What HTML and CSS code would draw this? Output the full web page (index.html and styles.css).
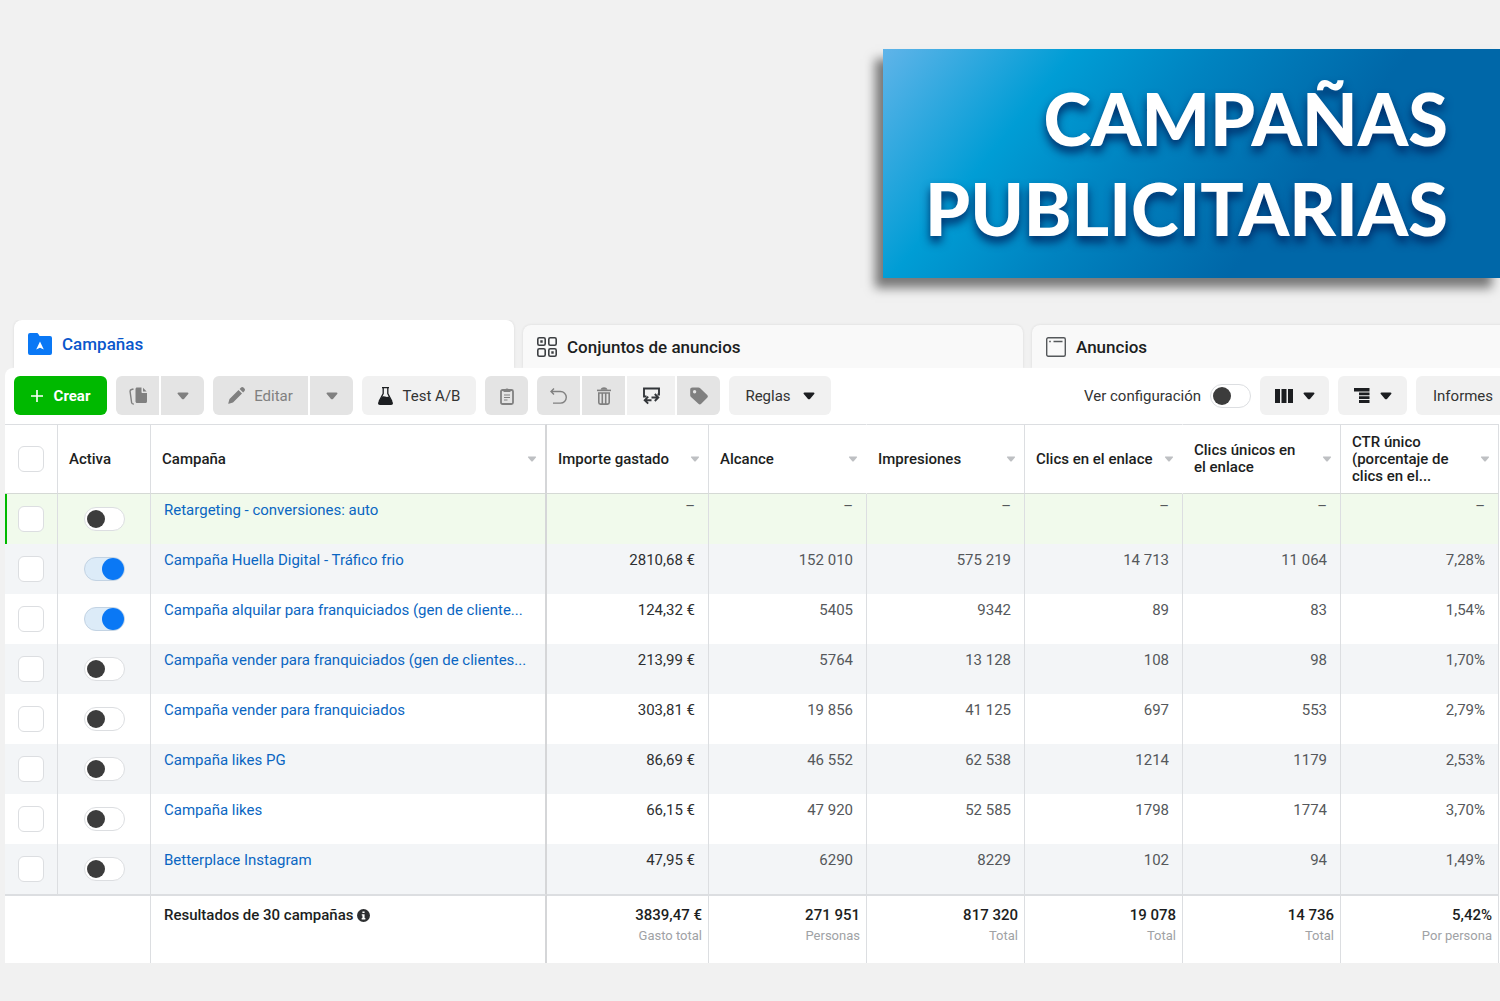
FILE: index.html
```html
<!DOCTYPE html>
<html lang="es">
<head>
    <meta charset="UTF-8">
    <meta name="viewport" content="width=device-width, initial-scale=1.0">
    <title>Campañas publicitarias</title>
    <link rel="stylesheet" href="styles.css">
</head>
<body>

    <svg class="sprite" aria-hidden="true">
        <symbol id="caret" viewBox="0 0 12 8"><path d="M1.5 .5h9c.9 0 1.3 1 .7 1.6L7 6.9c-.6.6-1.4.6-2 0L.8 2.100C.2 1.500.6.5 1.500.5z"/></symbol>
    </svg>

    <header class="banner">
        <h1>CAMPAÑAS<br>PUBLICITARIAS</h1>
    </header>

    <main class="manager">
        <nav class="tabs">
            <a class="tab active" href="#campanas">
                <svg width="24" height="22" viewBox="0 0 24 22"><path fill="#0a78f5" d="M2 0h6.500c1 0 1.500.4 2 1.200L11.600 3H22a2 2 0 0 1 2 2v15a2 2 0 0 1-2 2H2a2 2 0 0 1-2-2V2a2 2 0 0 1 2-2z"/><path fill="#fff" d="M12 8.500 15.800 16.500 12 14.800 8.200 16.500z"/></svg>
                Campañas
            </a>
            <a class="tab" href="#conjuntos">
                <svg width="20" height="20" viewBox="0 0 20 20" fill="none" stroke="#3c3f42" stroke-width="1.600"><rect x=".8" y=".8" width="7.400" height="7.400" rx="1.500"/><rect x="11.800" y=".8" width="7.400" height="7.400" rx="1.500"/><rect x=".8" y="11.800" width="7.400" height="7.400" rx="1.500"/><rect x="11.800" y="11.800" width="7.400" height="7.400" rx="1.500"/><path stroke-width="2.400" d="M3.300 4.500h2.400M14.300 15.500h2.400"/></svg>
                Conjuntos de anuncios
            </a>
            <a class="tab" href="#anuncios">
                <svg width="20" height="20" viewBox="0 0 20 20" fill="none" stroke="#55585b"><rect x=".7" y=".7" width="18.600" height="18.600" rx="1.500" stroke-width="1.400"/><path stroke-width="1.500" d="M3.200 4.500h1.600M7.500 4.500h9"/></svg>
                Anuncios
            </a>
        </nav>

        <section class="panel">
            <div class="toolbar">
                <button class="btn create">
                    <svg width="12" height="12" viewBox="0 0 12 12"><path stroke="currentColor" stroke-width="1.600" d="M6 0v12M0 6h12"/></svg>
                    Crear
                </button>
                <div class="group">
                    <button class="btn off icon" aria-label="Duplicar">
                        <svg width="18" height="18" viewBox="0 0 18 18"><path fill="currentColor" d="M8 .5h4.500V5c0 .7.500 1 1 1H18v8.500c0 .8-.6 1.500-1.400 1.500H8c-.8 0-1.500-.7-1.500-1.500V2C6.500 1.100 7.200.5 8 .5zM14 .8 17.600 4.600H14z"/><path fill="none" stroke="currentColor" stroke-width="1.400" d="M4.500 2 2.600 2.500C1.500 2.800.9 3.600 1.100 4.700l1.500 10.800c.1 1 .9 1.600 2.200 1.500"/></svg>
                    </button>
                    <button class="btn off icon" aria-label="Opciones de duplicar"><svg class="caret"><use href="#caret"/></svg></button>
                </div>
                <div class="group">
                    <button class="btn off edit">
                        <svg width="17" height="17" viewBox="0 0 17 17" fill="currentColor"><path d="M10.500 3 14 6.500 5 15.500.8 16.700c-.4.100-.6-.1-.5-.5L1.500 12zM11.600 1.900l1.200-1.200c.9-.9 1.900-.9 2.700-.1l.9.900c.8.800.8 1.900-.1 2.700l-1.200 1.200z"/></svg>
                        Editar
                    </button>
                    <button class="btn off icon" aria-label="Opciones de edición"><svg class="caret"><use href="#caret"/></svg></button>
                </div>
                <button class="btn test">
                    <svg width="15" height="18" viewBox="0 0 15 18"><path fill="none" stroke="#1c1e21" stroke-width="1.300" d="M4 .7h7M5.200 1v5.500L1 14.500M9.800 1v5.500L14 14.500"/><path fill="#1c1e21" d="M4.200 9.500c2-.8 4 1.200 6.600 0l3.800 5.500c.8 1.500.2 3-1.500 3H1.900C.2 18-.4 16.500.4 15z"/></svg>
                    Test A/B
                </button>
                <button class="btn off icon" aria-label="Pegar">
                    <svg width="14" height="18" viewBox="0 0 14 18"><rect x="1" y="3" width="12" height="14" rx="1.500" fill="none" stroke="currentColor" stroke-width="1.800"/><path fill="currentColor" d="M3.500 5V3h1.600a2 2 0 0 1 3.800 0h1.600v2z"/><path stroke="currentColor" stroke-width="1.200" d="M4 8h6M4 10.500h6M4 13h3.500"/></svg>
                </button>
                <div class="group">
                    <button class="btn off icon" aria-label="Deshacer">
                        <svg width="17" height="16" viewBox="0 0 17 16" fill="none" stroke="currentColor" stroke-width="1.400"><path d="M1 3.500h9.500a5.800 5.800 0 0 1 0 11.600H3M4 .5 1 3.500l3 3"/></svg>
                    </button>
                    <button class="btn off icon" aria-label="Eliminar">
                        <svg width="14" height="18" viewBox="0 0 14 18" fill="none" stroke="currentColor"><path stroke-width="1.600" d="M0 3.400h14"/><path fill="currentColor" stroke="none" d="M3.500 2.800C4 1 5.500.3 7 .3s3 .7 3.500 2.500z"/><path stroke-width="1.600" d="M1.800 6v9.500c0 1 .6 1.600 1.600 1.600h7.200c1 0 1.600-.6 1.600-1.600V6zM5.300 6v10.500M8.700 6v10.500"/></svg>
                    </button>
                    <button class="btn swap" aria-label="Prueba A/B">
                        <svg width="17" height="18" viewBox="0 0 17 18" fill="none" stroke="#33363a" stroke-width="1.900"><path d="M3.500 9.500H1V1.500h15v6h-1.500"/><path d="M8.500 13.200H2M5.200 9.700 1.700 13.200l3.500 3.500M8.500 10.500H15M11.800 7l3.500 3.500-3.500 3.500"/></svg>
                    </button>
                    <button class="btn off icon" aria-label="Etiquetar">
                        <svg width="18" height="18" viewBox="0 0 18 18"><path fill="currentColor" fill-rule="evenodd" d="M2.500.5h6c.6 0 1.200.3 1.700.7l7 6.800c.9.900.9 1.800 0 2.700l-6 6c-.9.900-1.900.9-2.800 0L1 10c-.5-.5-.8-1-.8-1.700V2.800C.2 1.400 1 .5 2.500.5zM4.600 3a1.700 1.700 0 1 0 0 3.400 1.700 1.700 0 0 0 0-3.400z"/></svg>
                    </button>
                </div>
                <button class="btn rules">Reglas <svg class="caret"><use href="#caret"/></svg></button>

                <label class="config">
                    Ver configuración
                    <input class="switch" type="checkbox">
                </label>
                <button class="btn view" aria-label="Columnas">
                    <svg width="18" height="14" viewBox="0 0 18 14" fill="#1c1e21"><path d="M0 0h5v14H0zM6.500 0h5v14h-5zM13 0h5v14h-5z"/></svg>
                    <svg class="caret"><use href="#caret"/></svg>
                </button>
                <button class="btn view" aria-label="Desglose">
                    <svg width="16" height="15" viewBox="0 0 16 15" fill="#1c1e21"><path d="M0 0h15.500v3.500H0zM5 4.500h10.500v2.800H5zM5 8.300h10.500v2.700H5zM5 12h10.500v3H5z"/></svg>
                    <svg class="caret"><use href="#caret"/></svg>
                </button>
                <button class="btn reports">Informes</button>
            </div>

            <table class="campaigns">
                <colgroup>
                    <col class="col-check">
                    <col class="col-active">
                    <col>
                    <col class="col-spend">
                    <col class="col-metric" span="5">
                </colgroup>
                <thead>
                    <tr>
                        <th class="center"><input class="check" type="checkbox" aria-label="Seleccionar todas"></th>
                        <th>Activa</th>
                        <th class="frozen"><div class="head"><span>Campaña</span><svg class="sort"><use href="#caret"/></svg></div></th>
                        <th><div class="head"><span>Importe gastado</span><svg class="sort"><use href="#caret"/></svg></div></th>
                        <th class="open"><div class="head"><span>Alcance</span><svg class="sort"><use href="#caret"/></svg></div></th>
                        <th><div class="head"><span>Impresiones</span><svg class="sort"><use href="#caret"/></svg></div></th>
                        <th class="open"><div class="head"><span>Clics en el enlace</span><svg class="sort"><use href="#caret"/></svg></div></th>
                        <th><div class="head"><span>Clics únicos en<br>el enlace</span><svg class="sort"><use href="#caret"/></svg></div></th>
                        <th><div class="head"><span>CTR único<br>(porcentaje de<br>clics en el...</span><svg class="sort"><use href="#caret"/></svg></div></th>
                    </tr>
                </thead>
                <tbody>
                    <tr class="draft">
                        <td class="center"><input class="check" type="checkbox" aria-label="Seleccionar"></td>
                        <td class="center"><input class="switch" type="checkbox" aria-label="Activa"></td>
                        <td class="frozen name"><a href="#">Retargeting - conversiones: auto</a></td>
                        <td class="empty">–</td><td class="empty">–</td><td class="empty">–</td><td class="empty">–</td><td class="empty">–</td><td class="empty">–</td>
                    </tr>
                    <tr>
                        <td class="center"><input class="check" type="checkbox" aria-label="Seleccionar"></td>
                        <td class="center"><input class="switch" type="checkbox" aria-label="Activa" checked></td>
                        <td class="frozen name"><a href="#">Campaña Huella Digital - Tráfico frio</a></td>
                        <td class="spend">2810,68 €</td><td>152 010</td><td>575 219</td><td>14 713</td><td>11 064</td><td>7,28%</td>
                    </tr>
                    <tr>
                        <td class="center"><input class="check" type="checkbox" aria-label="Seleccionar"></td>
                        <td class="center"><input class="switch" type="checkbox" aria-label="Activa" checked></td>
                        <td class="frozen name"><a href="#">Campaña alquilar para franquiciados (gen de cliente...</a></td>
                        <td class="spend">124,32 €</td><td>5405</td><td>9342</td><td>89</td><td>83</td><td>1,54%</td>
                    </tr>
                    <tr>
                        <td class="center"><input class="check" type="checkbox" aria-label="Seleccionar"></td>
                        <td class="center"><input class="switch" type="checkbox" aria-label="Activa"></td>
                        <td class="frozen name"><a href="#">Campaña vender para franquiciados (gen de clientes...</a></td>
                        <td class="spend">213,99 €</td><td>5764</td><td>13 128</td><td>108</td><td>98</td><td>1,70%</td>
                    </tr>
                    <tr>
                        <td class="center"><input class="check" type="checkbox" aria-label="Seleccionar"></td>
                        <td class="center"><input class="switch" type="checkbox" aria-label="Activa"></td>
                        <td class="frozen name"><a href="#">Campaña vender para franquiciados</a></td>
                        <td class="spend">303,81 €</td><td>19 856</td><td>41 125</td><td>697</td><td>553</td><td>2,79%</td>
                    </tr>
                    <tr>
                        <td class="center"><input class="check" type="checkbox" aria-label="Seleccionar"></td>
                        <td class="center"><input class="switch" type="checkbox" aria-label="Activa"></td>
                        <td class="frozen name"><a href="#">Campaña likes PG</a></td>
                        <td class="spend">86,69 €</td><td>46 552</td><td>62 538</td><td>1214</td><td>1179</td><td>2,53%</td>
                    </tr>
                    <tr>
                        <td class="center"><input class="check" type="checkbox" aria-label="Seleccionar"></td>
                        <td class="center"><input class="switch" type="checkbox" aria-label="Activa"></td>
                        <td class="frozen name"><a href="#">Campaña likes</a></td>
                        <td class="spend">66,15 €</td><td>47 920</td><td>52 585</td><td>1798</td><td>1774</td><td>3,70%</td>
                    </tr>
                    <tr>
                        <td class="center"><input class="check" type="checkbox" aria-label="Seleccionar"></td>
                        <td class="center"><input class="switch" type="checkbox" aria-label="Activa"></td>
                        <td class="frozen name"><a href="#">Betterplace Instagram</a></td>
                        <td class="spend">47,95 €</td><td>6290</td><td>8229</td><td>102</td><td>94</td><td>1,49%</td>
                    </tr>
                </tbody>
                <tfoot>
                    <tr>
                        <td colspan="2"></td>
                        <td class="frozen name">Resultados de 30 campañas
                            <svg class="info" viewBox="0 0 12 12"><circle cx="6" cy="6" r="6" fill="#2d2f31"/><path fill="#fff" d="M5 2.200h2v1.600H5zM4.400 4.800H7v3.600h.7v1.200H4.300V8.400H5V6h-.6z"/></svg>
                        </td>
                        <td>3839,47 €<small>Gasto total</small></td>
                        <td>271 951<small>Personas</small></td>
                        <td>817 320<small>Total</small></td>
                        <td>19 078<small>Total</small></td>
                        <td>14 736<small>Total</small></td>
                        <td>5,42%<small>Por persona</small></td>
                    </tr>
                </tfoot>
            </table>
        </section>
    </main>

</body>
</html>
```

FILE: styles.css
```css
* {
    box-sizing: border-box;
}
body {
    margin: 0;
    background-color: #f1f1f1;
    font-family: Roboto, "Liberation Sans", sans-serif;
    font-size: 15px;
    color: #1c1e21;
    overflow-x: hidden;
}
svg {
    display: block;
    flex: none;
}
.sprite {
    display: none;
}

/* banner */
.banner {
    width: fit-content;
    margin: 49px 0 42px auto;
    padding: 24px 52px 25px 42px;
    background: linear-gradient(129deg, #60b4e9 0%, #009dd5 24%, #0083c0 42%, #0067a8 66%);
    box-shadow: -8px 10px 10px rgba(0, 0, 0, 0.5);
}
h1 {
    margin: 0;
    font-family: Lato, "Open Sans", sans-serif;
    font-size: 72px;
    font-weight: 900;
    line-height: 90px;
    text-align: right;
    color: #fff;
    text-shadow: 0 6px 10px #002c68;
}

/* tabs */
.manager {
    overflow: hidden;
}
.tabs {
    display: grid;
    grid-template-columns: repeat(3, 1fr);
    gap: 9px;
    align-items: end;
    margin: 0 -32px 0 14px;
}
.tab {
    display: flex;
    align-items: center;
    gap: 10px;
    height: 43px;
    padding: 0 14px;
    border-radius: 8px 8px 0 0;
    background-color: #f9f9f9;
    box-shadow: 0 0 3px rgba(0, 0, 0, 0.1);
    font-size: 17px;
    font-weight: 500;
    color: #1c1e21;
    text-decoration: none;
}
.tab.active {
    height: 48px;
    background-color: #fff;
    color: #0a57cc;
}

/* toolbar */
.panel {
    position: relative;
    margin-left: 5px;
    padding-right: 1px;
    background-color: #fff;
    border-radius: 8px 0 0 0;
}
.toolbar {
    display: flex;
    align-items: flex-start;
    gap: 9px;
    height: 56px;
    margin-right: -20px;
    padding: 8px 0 0 9px;
}
.group {
    display: flex;
    gap: 2px;
}
.btn {
    display: flex;
    align-items: center;
    justify-content: center;
    flex: none;
    height: 39px;
    padding: 0;
    border: 0;
    border-radius: 6px;
    background-color: #f1f1f1;
    font-family: inherit;
    font-size: 15px;
    color: #333;
    cursor: pointer;
}
.group .btn:not(:first-child) {
    border-top-left-radius: 0;
    border-bottom-left-radius: 0;
}
.group .btn:not(:last-child) {
    border-top-right-radius: 0;
    border-bottom-right-radius: 0;
}
.btn.off {
    background-color: #e4e4e4;
    color: #808080;
}
.btn.icon {
    width: 43px;
}
.btn.create {
    gap: 11px;
    width: 93px;
    background-color: #00b900;
    font-weight: 700;
    color: #fff;
}
.btn.edit {
    gap: 9px;
    width: 95px;
}
.btn.test {
    gap: 10px;
    width: 114px;
}
.btn.swap {
    width: 48px;
}
.btn.rules {
    gap: 12px;
    width: 102px;
}
.btn.view {
    gap: 10px;
    width: 69px;
}
.btn.reports {
    width: 103px;
    padding-left: 17px;
    justify-content: flex-start;
}
.caret {
    width: 12px;
    height: 8px;
    fill: currentColor;
}
.rules .caret,
.view .caret {
    fill: #1c1e21;
}
.config {
    display: flex;
    align-items: center;
    gap: 9px;
    height: 39px;
    margin-left: auto;
    color: #333;
}

/* inputs */
.check,
.switch {
    appearance: none;
    display: block;
    margin: 0;
    border: 1px solid #dcdee1;
    background-color: #fff;
    cursor: pointer;
}
.check {
    width: 26px;
    height: 26px;
    border-radius: 6px;
}
.check:checked {
    background-color: #0a78f5;
}
.switch {
    display: flex;
    align-items: center;
    width: 41px;
    height: 24px;
    padding: 0 2px;
    border-radius: 12px;
}
.switch::before {
    content: "";
    width: 18px;
    height: 18px;
    border-radius: 50%;
    background-color: #3c3c3c;
}
.switch:checked {
    justify-content: flex-end;
    padding: 0;
    border-color: #c3d3e3;
    background-color: #dcebf8;
}
.switch:checked::before {
    width: 22px;
    height: 22px;
    background-color: #0a78f5;
}

/* table */
.campaigns {
    width: 100%;
    table-layout: fixed;
    border-collapse: separate;
    border-spacing: 0;
}
.col-check {
    width: 53px;
}
.col-active {
    width: 93px;
}
.col-spend {
    width: 162px;
}
.col-metric {
    width: 158px;
}
th,
td {
    border-right: 1px solid #dcdee1;
}
th {
    height: 70px;
    padding: 0 8px 0 11px;
    border-top: 1px solid #dcdee1;
    border-bottom: 1px solid #d5d9d5;
    font-weight: 500;
    line-height: 17px;
    text-align: left;
}
th.open {
    border-right-color: transparent;
}
.head {
    display: flex;
    align-items: center;
    justify-content: space-between;
    white-space: nowrap;
}
.sort {
    width: 10px;
    height: 6px;
    fill: #bec0c3;
}
td {
    height: 50px;
    padding: 6px 13px 0 0;
    vertical-align: top;
    line-height: 20px;
    text-align: right;
    color: #55585b;
}
.spend {
    color: #2d2f31;
}
th.center,
td.center {
    padding: 0;
    vertical-align: middle;
}
.center input {
    margin: 0 auto;
}
.frozen {
    border-right: 2px solid #d5d6d8;
}
.name {
    padding: 6px 13px 0;
    text-align: left;
    white-space: nowrap;
    overflow: hidden;
}
.name a {
    color: #0a66c2;
    text-decoration: none;
}
.empty {
    line-height: 12px;
}
tbody tr:nth-child(even) td {
    background-color: #f3f5f7;
}
tbody tr.draft td {
    background-color: #f1faec;
}
.draft td:first-child {
    box-shadow: inset 2px 0 #00b900;
}
tfoot td {
    height: 69px;
    padding: 9px 6px 0 0;
    border-top: 2px solid #dcdee1;
    font-weight: 500;
    color: #1c1e21;
}
tfoot .name {
    padding: 9px 13px 0;
}
tfoot small {
    display: block;
    font-size: 13px;
    font-weight: 400;
    line-height: 22px;
    color: #a0a2a5;
}
.info {
    display: inline-block;
    width: 13px;
    height: 13px;
    vertical-align: -2px;
}
```
